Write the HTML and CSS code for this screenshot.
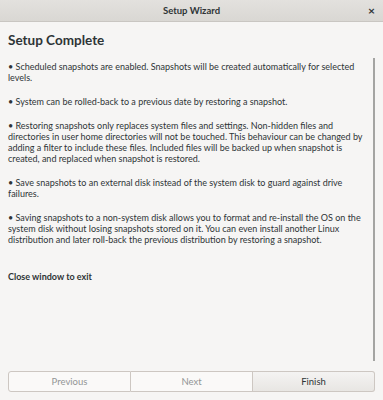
FILE: index.html
```html
<!DOCTYPE html>
<html>
<head>
<meta charset="utf-8">
<link rel="stylesheet" href="styles.css">
</head>
<body>
<div class="window">
  <div class="titlebar">
    <span class="title">Setup Wizard</span>
    <span class="close">×</span>
  </div>
  <div class="content">
    <div class="scrollarea">
      <div class="text">
        <h1 class="heading">Setup Complete</h1>
        <p>• Scheduled snapshots are enabled. Snapshots will be created automatically for selected levels.</p>
        <p>• System can be rolled-back to a previous date by restoring a snapshot.</p>
        <p>• Restoring snapshots only replaces system files and settings. Non-hidden files and directories in user home directories will not be touched. This behaviour can be changed by adding a filter to include these files. Included files will be backed up when snapshot is created, and replaced when snapshot is restored.</p>
        <p>• Save snapshots to an external disk instead of the system disk to guard against drive failures.</p>
        <p>• Saving snapshots to a non-system disk allows you to format and re-install the OS on the system disk without losing snapshots stored on it. You can even install another Linux distribution and later roll-back the previous distribution by restoring a snapshot.</p>
        <p class="exit">Close window to exit</p>
      </div>
      <div class="scrollbar"></div>
    </div>
    <div class="buttons">
      <button class="btn disabled">Previous</button>
      <button class="btn disabled">Next</button>
      <button class="btn finish">Finish</button>
    </div>
  </div>
</div>
</body>
</html>
```
FILE: styles.css
```css
* { box-sizing: border-box; }
html, body { margin: 0; padding: 0; }
body {
  width: 383px;
  height: 400px;
  background: #f6f5f4;
  font-family: "Lato", "Noto Sans", sans-serif;
  color: #2e3436;
  overflow: hidden;
}
.window { display: flex; flex-direction: column; height: 400px; }
.titlebar {
  height: 22px;
  background: linear-gradient(#e3e1de, #d9d7d3);
  border-bottom: 1px solid #c9c6c2;
  display: flex;
  align-items: center;
  justify-content: center;
  position: relative;
}
.title { font-size: 9.5px; font-weight: bold; color: #2e3436; }
.close {
  position: absolute;
  right: 8px;
  top: 4px;
  font-size: 12px;
  font-weight: bold;
  line-height: 14px;
  color: #2e3436;
}
.content { flex: 1; display: flex; flex-direction: column; padding: 0 8px 8px 8px; }
.scrollarea { flex: 1; display: flex; }
.text { flex: 1; padding-right: 3px; }
.heading { font-size: 13.5px; font-weight: bold; margin: 9px 0 12px 0; line-height: 18px; }
.text p { font-size: 9px; line-height: 11px; margin: 0 0 13px 0; }
.text p.exit { font-weight: bold; margin-top: 26px; }
.scrollbar { width: 2px; background: #a4a4a2; margin: 36px 0 10px 0; }
.buttons { display: flex; height: 21px; margin-top: 0; }
.btn {
  flex: 1;
  font-family: inherit;
  font-size: 9.5px;
  border: 1px solid #cdc7c2;
  background: #faf9f8;
  color: #929595;
  margin: 0;
  padding: 0;
}
.btn + .btn { border-left: none; }
.btn:first-child { border-radius: 3px 0 0 3px; }
.btn:last-child { border-radius: 0 3px 3px 0; }
.finish { background: linear-gradient(#f4f3f2, #e8e6e3); color: #2e3436; }
```
